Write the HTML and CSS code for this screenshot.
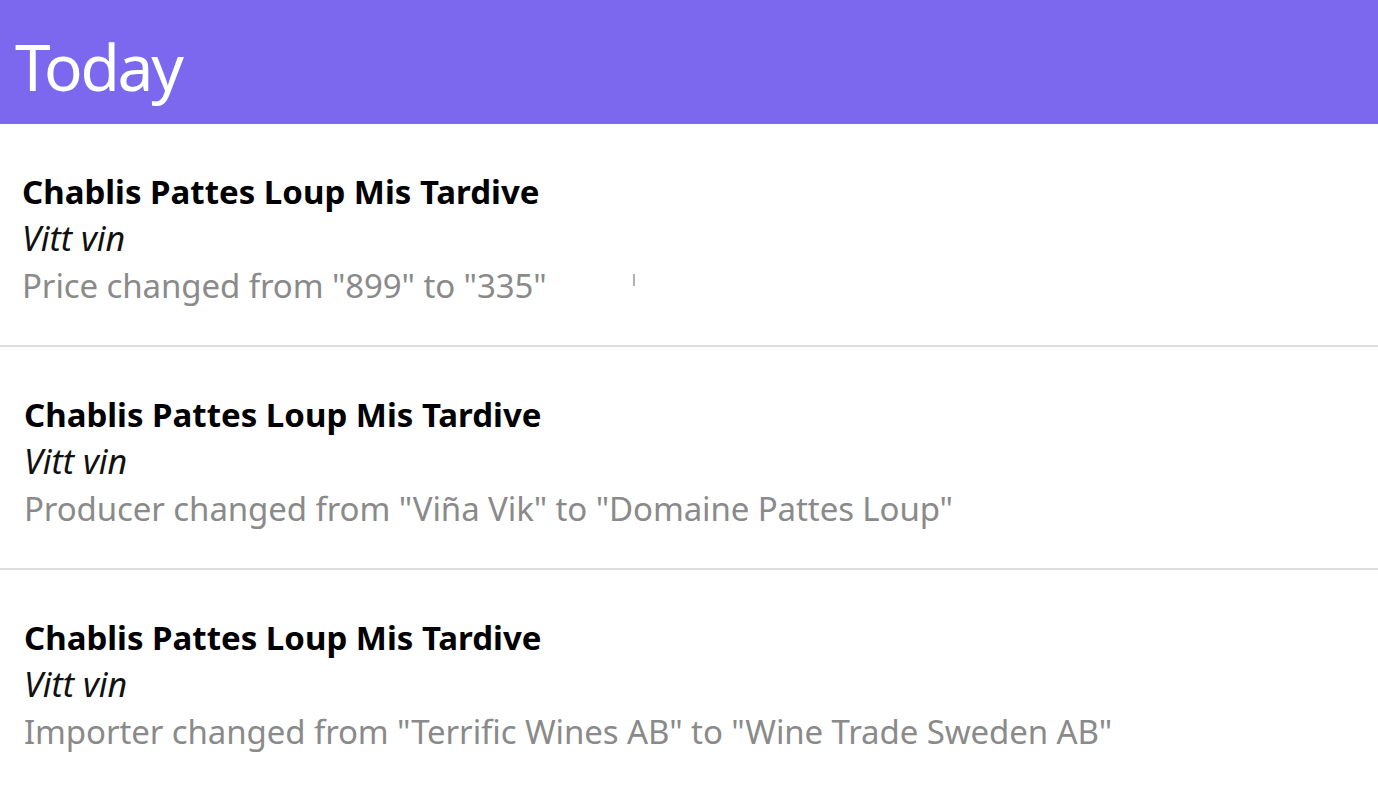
FILE: index.html
```html
<!DOCTYPE html>
<html lang="en">
<head>
<meta charset="utf-8">
<title>Today</title>
<link rel="stylesheet" href="styles.css">
</head>
<body>
  <header class="header">
    <h1 class="header-title">Today</h1>
  </header>
  <main class="list">
    <section class="item">
      <div class="item-title">Chablis Pattes Loup Mis Tardive</div>
      <div class="item-type">Vitt vin</div>
      <div class="item-change">Price changed from "899" to "335"<span class="caret"></span></div>
    </section>
    <section class="item item-shift">
      <div class="item-title">Chablis Pattes Loup Mis Tardive</div>
      <div class="item-type">Vitt vin</div>
      <div class="item-change">Producer changed from "Viña Vik" to "Domaine Pattes Loup"</div>
    </section>
    <section class="item item-shift item-last">
      <div class="item-title">Chablis Pattes Loup Mis Tardive</div>
      <div class="item-type">Vitt vin</div>
      <div class="item-change">Importer changed from "Terrific Wines AB" to "Wine Trade Sweden AB"</div>
    </section>
  </main>
</body>
</html>
```
FILE: styles.css
```css
html, body {
  margin: 0;
  padding: 0;
  background: #ffffff;
}
body {
  font-family: "Noto Sans", "Open Sans", sans-serif;
  overflow: hidden;
}
.header {
  background: #7b68ee;
  height: 124px;
  display: flex;
  align-items: center;
  padding-left: 15px;
  box-sizing: border-box;
}
.header-title {
  margin: 0;
  color: #ffffff;
  font-weight: 400;
  font-size: 64px;
  line-height: 1;
  padding-top: 10px;
  letter-spacing: -2.2px;
}
.list {
  display: flex;
  flex-direction: column;
}
.item {
  padding: 44px 0 36px 22px;
  border-bottom: 2px solid #dddddd;
  display: flex;
  flex-direction: column;
}
.item-shift {
  padding-left: 24px;
}
.item-last {
  border-bottom: none;
}
.item-title,
.item-type,
.item-change {
  font-size: 33px;
  line-height: 47px;
  white-space: nowrap;
}
.item-title {
  font-weight: 700;
  color: #000000;
}
.item-type {
  font-style: italic;
  font-size: 34px;
  color: #111111;
}
.item-change {
  color: #8a8a8a;
  letter-spacing: -0.1px;
}
.caret {
  display: inline-block;
  width: 2px;
  height: 12px;
  background: #b0b0b0;
  margin-left: 86px;
  vertical-align: 12px;
}
```
